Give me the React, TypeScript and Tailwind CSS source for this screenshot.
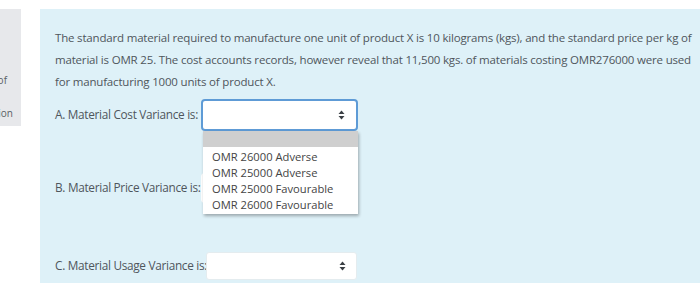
import React from "react";

const Arrows = () => (
  <svg width="7" height="10" viewBox="0 0 7 10" className="shrink-0">
    <path d="M3.5 0.5 L6.5 4 L0.5 4 Z" fill="#3a3f44" />
    <path d="M3.5 9.5 L6.5 6 L0.5 6 Z" fill="#3a3f44" />
  </svg>
);

export default function App() {
  const font = { fontFamily: '"Open Sans", "Noto Sans", sans-serif' };
  return (
    <div className="w-[700px] h-[286px] bg-white overflow-hidden relative" style={font}>
      <div className="flex pt-[9px]">
        <div className="w-[21px] h-[117px] bg-[#e7e8eb] shrink-0 overflow-hidden relative text-[10px] text-[#5a5f66]">
          <div className="absolute right-[14px] top-[64px] whitespace-nowrap">of</div>
          <div className="absolute right-[8px] top-[97px] whitespace-nowrap">tion</div>
        </div>
        <div className="w-[19px] shrink-0" />
        <div className="flex-1 h-[274px] bg-[#def1f8] pl-[15px] pt-[18px] text-[11.8px] text-[#4f565c]">
          <p className="leading-[22px] whitespace-nowrap text-[11.5px] tracking-[-0.18px]">
            The standard material required to manufacture one unit of product X is 10 kilograms (kgs), and the standard price per kg of
            <br />
            material is OMR 25. The cost accounts records, however reveal that 11,500 kgs. of materials costing OMR276000 were used
            <br />
            for manufacturing 1000 units of product X.
          </p>
          <div className="flex items-center mt-[6px] h-[32px]">
            <span className="tracking-[-0.3px] w-[146px] whitespace-nowrap">A. Material Cost Variance is:</span>
            <div className="relative">
              <div className="w-[157px] h-[32px] bg-white border-2 border-[#5e9bd6] rounded-[4px] flex items-center justify-end pr-[11px]">
                <Arrows />
              </div>
              <div className="absolute left-[2px] top-[32px] w-[155px] bg-white shadow-[1px_2px_3px_rgba(0,0,0,0.3)] text-[11.2px] text-[#444] z-10">
                <div className="h-[16px] bg-[#cfcfcf]" />
                <div className="pl-[9px] pt-[2px] pb-[1px] leading-[16px]">
                  <div>OMR 26000 Adverse</div>
                  <div>OMR 25000 Adverse</div>
                  <div>OMR 25000 Favourable</div>
                  <div>OMR 26000 Favourable</div>
                </div>
              </div>
            </div>
          </div>
          <div className="flex items-center mt-[41px] h-[32px]">
            <span className="tracking-[-0.3px] w-[146px] whitespace-nowrap">B. Material Price Variance is:</span>
            <div className="w-[157px] h-[30px] bg-white rounded-[4px]" />
          </div>
          <div className="flex items-center mt-[48px] h-[28px]">
            <span className="tracking-[-0.3px] w-[151px] whitespace-nowrap">C. Material Usage Variance is:</span>
            <div className="w-[151px] h-[28px] bg-white rounded-[3px] border border-[#e4ecef] flex items-center justify-end pr-[10px]">
              <Arrows />
            </div>
          </div>
        </div>
      </div>
    </div>
  );
}
